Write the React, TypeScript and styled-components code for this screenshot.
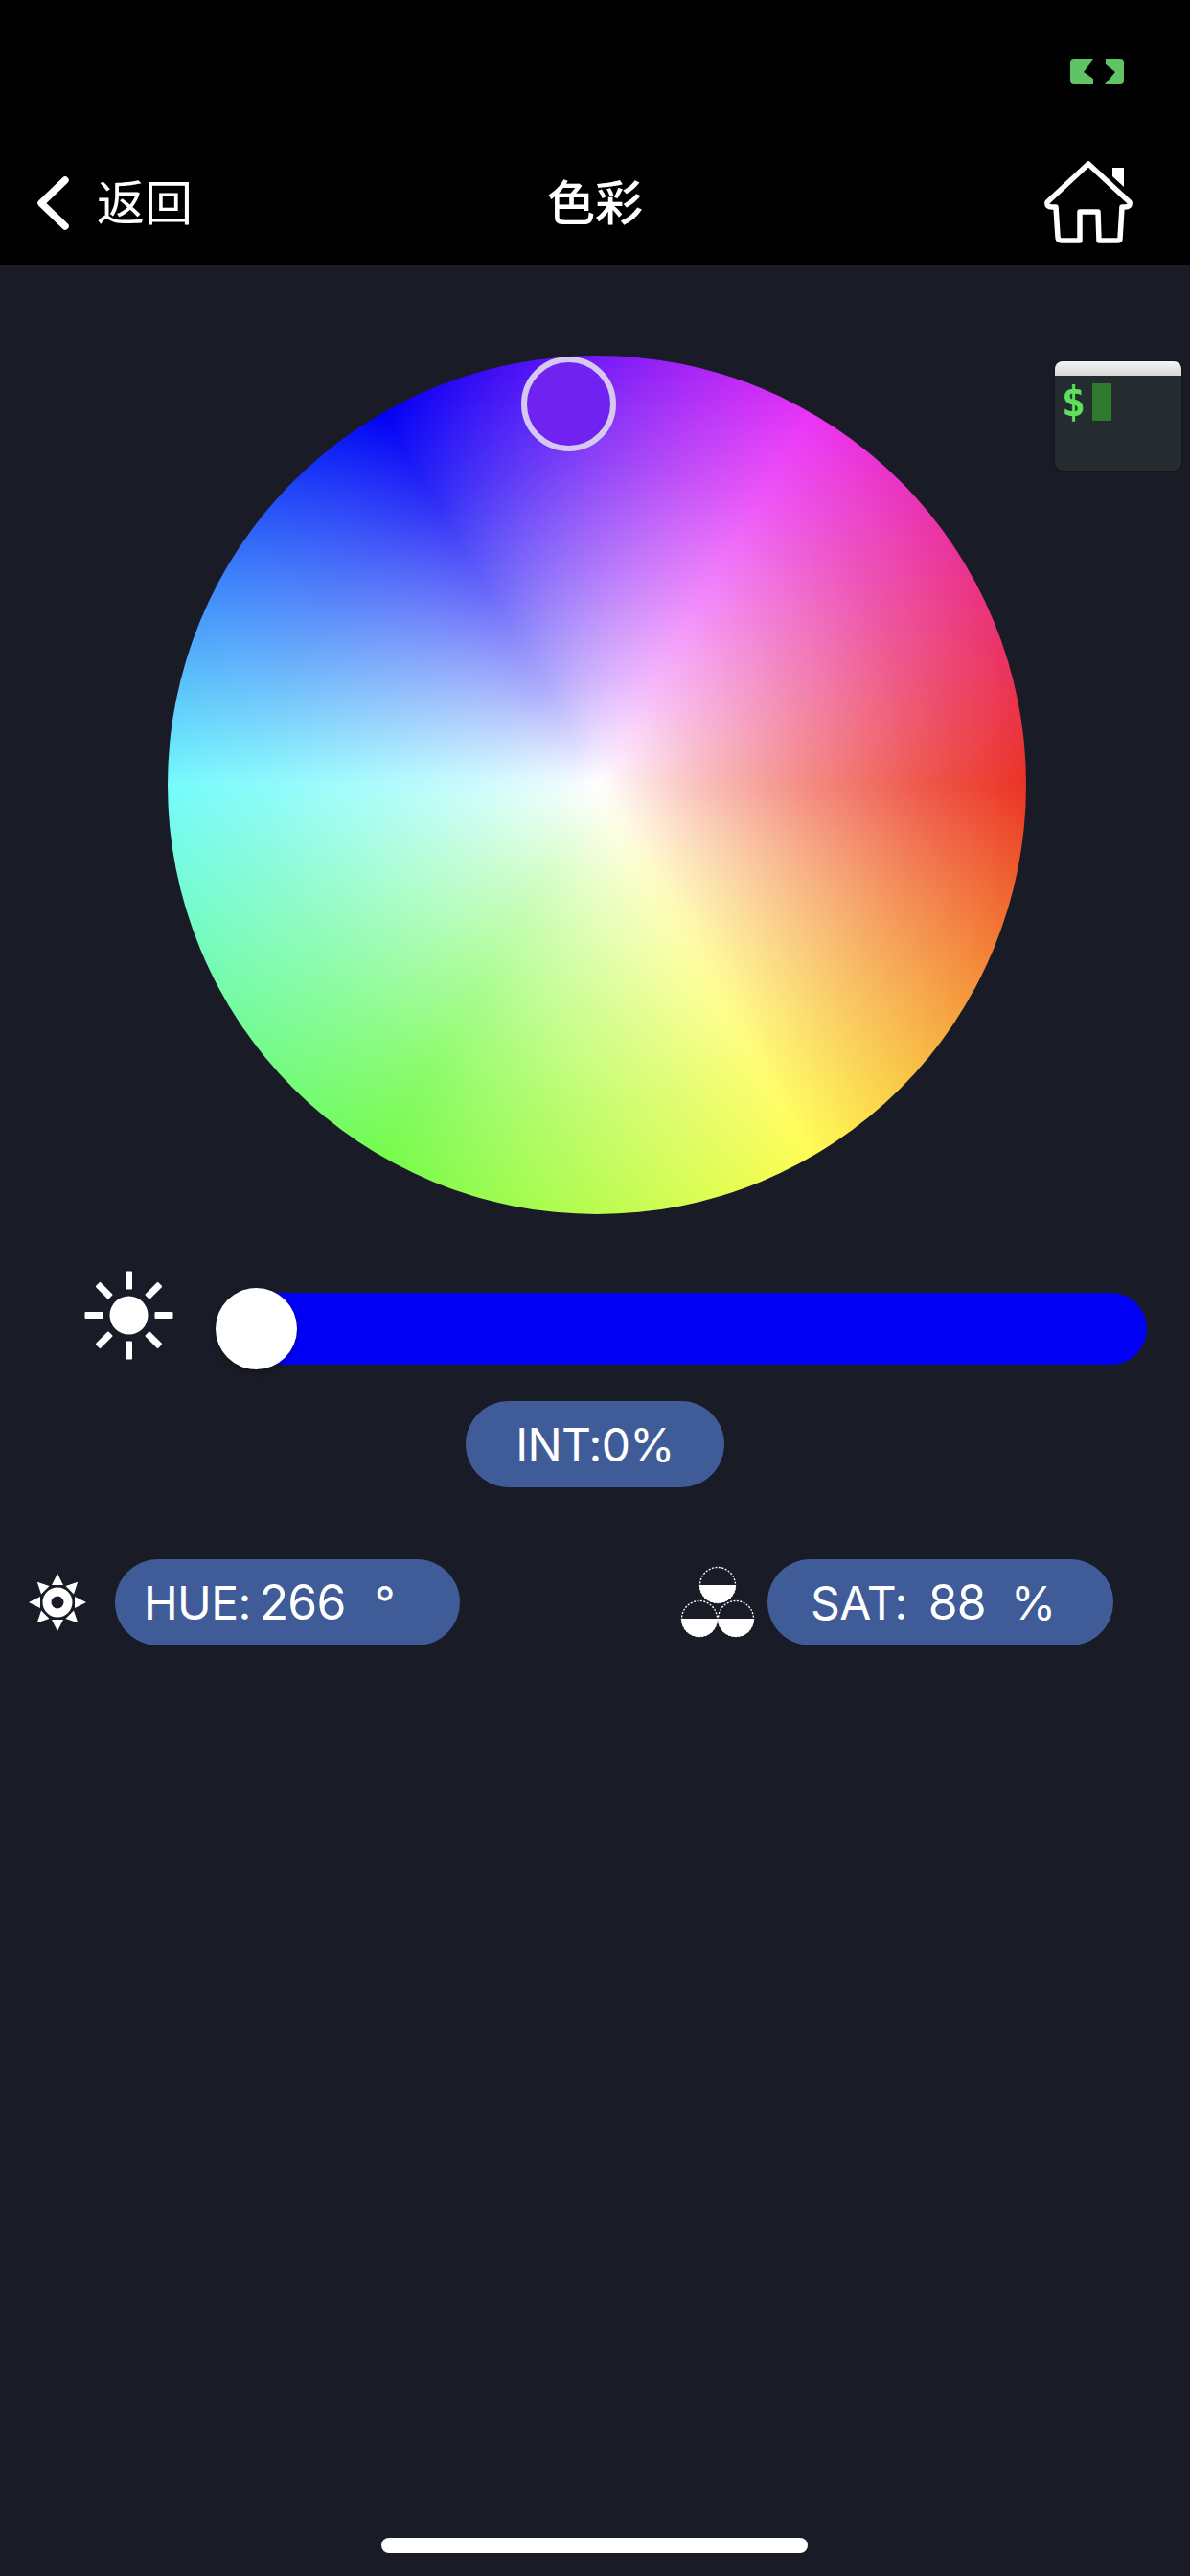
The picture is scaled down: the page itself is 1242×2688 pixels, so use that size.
import React from "react";
import styled, { createGlobalStyle } from "styled-components";

const Global = createGlobalStyle`
  html, body { margin: 0; padding: 0; background: #191c26; }
  body { font-family: "Inter", "Noto Sans CJK SC", sans-serif; color: #fff; }
`;

const Page = styled.div`
  position: relative;
  width: 1242px;
  height: 2688px;
  display: flex;
  flex-direction: column;
  background: #191c26;
  overflow: hidden;
`;

const Header = styled.header`
  height: 276px;
  background: #000;
  display: flex;
  flex-direction: column;
`;

const StatusBar = styled.div`
  height: 168px;
  padding: 62px 69px 0 0;
  box-sizing: border-box;
  display: flex;
  justify-content: flex-end;
  align-items: flex-start;
`;

const NavBar = styled.nav`
  height: 84px;
  padding: 0 60px 0 38px;
  display: grid;
  grid-template-columns: 533px auto 1fr;
  align-items: center;
`;

const BackButton = styled.div`
  display: flex;
  align-items: center;
  gap: 29px;
`;

const NavText = styled.span<{ $weight: number }>`
  display: block;
  font-family: "Noto Sans CJK SC", sans-serif;
  font-size: 50px;
  font-weight: ${(p) => p.$weight};
  line-height: 76px;
  padding-bottom: 8px;
`;

const HomeSlot = styled.div`
  display: flex;
  justify-content: flex-end;
`;

const Main = styled.main`
  flex: 1;
  display: flex;
  flex-direction: column;
`;

const hueRing =
  "conic-gradient(from 90deg, #eb3324, #fffd54 60deg, #75fb4c 120deg, #75fbfd 180deg, #0000f5 240deg, #ea33f7 300deg, #eb3324 360deg)";

const Wheel = styled.div`
  position: relative;
  width: 896px;
  height: 896px;
  margin: 95px 0 0 175px;
  border-radius: 50%;
  background: ${hueRing};

  &::before {
    content: "";
    position: absolute;
    inset: 0;
    border-radius: 50%;
    background: ${hueRing};
    filter: blur(11px);
    -webkit-mask-image: radial-gradient(circle closest-side, #000 0%, #000 35%, rgba(0, 0, 0, 0) 85%);
    mask-image: radial-gradient(circle closest-side, #000 0%, #000 35%, rgba(0, 0, 0, 0) 85%);
  }

  &::after {
    content: "";
    position: absolute;
    inset: 0;
    border-radius: 50%;
    background: radial-gradient(
      circle closest-side,
      #fff 0%,
      rgba(255, 255, 255, 0.86) 10%,
      rgba(255, 255, 255, 0.67) 25%,
      rgba(255, 255, 255, 0.42) 50%,
      rgba(255, 255, 255, 0.19) 75%,
      rgba(255, 255, 255, 0) 100%
    );
  }
`;

const WheelKnob = styled.div`
  position: absolute;
  z-index: 1;
  left: 369px;
  top: 1px;
  width: 99px;
  height: 99px;
  box-sizing: border-box;
  border: 6px solid #d6c8f0;
  border-radius: 50%;
  background: #6f22f0;
`;

const TerminalBadge = styled.div`
  position: absolute;
  left: 1101px;
  top: 377px;
  width: 132px;
  height: 114px;
  border-radius: 8px;
  overflow: hidden;
  background: #242c30;
  box-shadow: 0 0 2px rgba(0, 0, 0, 0.8);
  display: flex;
  flex-direction: column;
`;

const TerminalTitle = styled.div`
  height: 15px;
  background: linear-gradient(#f4f4f4, #d9d9d9);
`;

const TerminalBody = styled.div`
  display: flex;
  align-items: flex-start;
  gap: 8px;
  padding: 8px 0 0 8px;
`;

const Prompt = styled.span`
  font-family: "DejaVu Sans Mono", monospace;
  font-weight: 700;
  font-size: 42px;
  line-height: 40px;
  color: #5ee05a;
  width: 23px;
  display: flex;
  justify-content: center;
`;

const Cursor = styled.span`
  width: 20px;
  height: 39px;
  background: #2f7a2c;
`;

const SliderRow = styled.div`
  display: flex;
  align-items: flex-start;
  gap: 44px;
  margin: 59px 0 0 88px;
`;

const Slider = styled.div`
  position: relative;
  width: 972px;
  height: 85px;
  margin-top: 18px;
  display: flex;
  align-items: center;
`;

const Track = styled.div`
  width: 100%;
  height: 75px;
  border-radius: 38px;
  background: #0000f5;
`;

const Thumb = styled.div`
  position: absolute;
  left: 0;
  top: 0;
  width: 85px;
  height: 85px;
  border-radius: 50%;
  background: #fff;
  box-shadow: 0 3px 6px rgba(0, 0, 0, 0.25);
`;

const Pill = styled.div<{ $width: number }>`
  width: ${(p) => p.$width}px;
  height: 90px;
  box-sizing: border-box;
  border-radius: 45px;
  background: #405c98;
  display: flex;
  align-items: center;
  font-size: 48px;
  font-weight: 400;
`;

const IntPill = styled(Pill)`
  justify-content: center;
  margin: 33px 0 0 486px;
  letter-spacing: -0.7px;
`;

const StatsRow = styled.div`
  display: flex;
  justify-content: space-between;
  margin-top: 75px;
  padding: 0 80px 0 29px;
`;

const StatGroup = styled.div<{ $gap: number }>`
  display: flex;
  align-items: center;
  gap: ${(p) => p.$gap}px;
`;

const StatLabel = styled.span<{ $left: number }>`
  margin-left: ${(p) => p.$left}px;
  letter-spacing: -0.6px;
`;

const StatValue = styled.span<{ $left: number }>`
  margin-left: ${(p) => p.$left}px;
  font-size: 50px;
  letter-spacing: -0.8px;
`;

const StatUnit = styled.span<{ $left: number }>`
  margin-left: ${(p) => p.$left}px;
`;

const HomeIndicator = styled.div`
  position: absolute;
  left: 398px;
  top: 2648px;
  width: 445px;
  height: 16px;
  border-radius: 8px;
  background: #fff;
`;

const BatteryIcon = () => (
  <svg width="56" height="26" viewBox="0 0 56 26" fill="#5fc465">
    <path d="M4 0 L24 0 L14 13 L24 20 L24 26 L4 26 Q0 26 0 22 L0 4 Q0 0 4 0Z" />
    <path d="M37 0 L52 0 Q56 0 56 4 L56 22 Q56 26 52 26 L36 26 L47 13 L37 5Z" />
  </svg>
);

const Chevron = () => (
  <svg width="34" height="56" viewBox="0 0 34 56" fill="none" stroke="#fff" strokeWidth="7.5" strokeLinecap="round" strokeLinejoin="round">
    <path d="M30 4 L5 28 L30 52" />
  </svg>
);

const HouseIcon = () => (
  <svg width="92" height="88" viewBox="-1 -1 92 88" fill="none">
    <path d="M70 6 H82 V26 L70 15Z" fill="#fff" />
    <path
      d="M45 2 L88 42 Q89 47 83 47 L80 47 L78 80 Q78 82 75 82 L56 82 L55 52 L36 52 L36 82 L17 82 Q13 82 13 78 L11 47 L7 47 Q1 47 2 42Z"
      stroke="#fff"
      strokeWidth="5.5"
      strokeLinejoin="round"
      fill="#000"
    />
  </svg>
);

const rayAngles = [0, 45, 90, 135, 180, 225, 270, 315];

const SunIcon = () => (
  <svg width="93" height="93" viewBox="-46.5 -46.5 93 93" fill="#fff">
    <circle r="20" />
    {rayAngles.map((a) => (
      <rect key={a} x="-3.5" y="-46" width="7" height="19" rx="1" transform={`rotate(${a})`} />
    ))}
  </svg>
);

const GearSunIcon = () => (
  <svg width="62" height="62" viewBox="-31 -31 62 62">
    <circle r="11" fill="none" stroke="#fff" strokeWidth="9" />
    {rayAngles.map((a) => (
      <path key={a} d="M0 -30 L-6 -18 L6 -18Z" fill="#fff" transform={`rotate(${a})`} />
    ))}
  </svg>
);

const HalfBall = ({ cx, cy }: { cx: number; cy: number }) => (
  <g>
    <circle cx={cx} cy={cy} r="18.5" fill="none" stroke="#fff" strokeWidth="1.3" strokeDasharray="2 1.5" />
    <path d={`M${cx - 19} ${cy} A19 19 0 0 0 ${cx + 19} ${cy}Z`} fill="#fff" />
  </g>
);

const BallsIcon = () => (
  <svg width="78" height="76" viewBox="0 0 78 76">
    <HalfBall cx={39} cy={20} />
    <HalfBall cx={20} cy={55} />
    <HalfBall cx={58} cy={55} />
  </svg>
);

export default function App() {
  return (
    <Page>
      <Global />
      <Header>
        <StatusBar>
          <BatteryIcon />
        </StatusBar>
        <NavBar>
          <BackButton>
            <Chevron />
            <NavText $weight={400}>返回</NavText>
          </BackButton>
          <NavText $weight={500}>色彩</NavText>
          <HomeSlot>
            <HouseIcon />
          </HomeSlot>
        </NavBar>
      </Header>
      <Main>
        <Wheel>
          <WheelKnob />
        </Wheel>
        <SliderRow>
          <SunIcon />
          <Slider>
            <Track />
            <Thumb />
          </Slider>
        </SliderRow>
        <IntPill $width={270}>INT:0%</IntPill>
        <StatsRow>
          <StatGroup $gap={29}>
            <GearSunIcon />
            <Pill $width={360}>
              <StatLabel $left={30}>HUE:</StatLabel>
              <StatValue $left={9}>266</StatValue>
              <StatUnit $left={30}>°</StatUnit>
            </Pill>
          </StatGroup>
          <StatGroup $gap={13}>
            <BallsIcon />
            <Pill $width={361}>
              <StatLabel $left={45}>SAT:</StatLabel>
              <StatValue $left={22}>88</StatValue>
              <StatUnit $left={26}>%</StatUnit>
            </Pill>
          </StatGroup>
        </StatsRow>
      </Main>
      <TerminalBadge>
        <TerminalTitle />
        <TerminalBody>
          <Prompt>$</Prompt>
          <Cursor />
        </TerminalBody>
      </TerminalBadge>
      <HomeIndicator />
    </Page>
  );
}
